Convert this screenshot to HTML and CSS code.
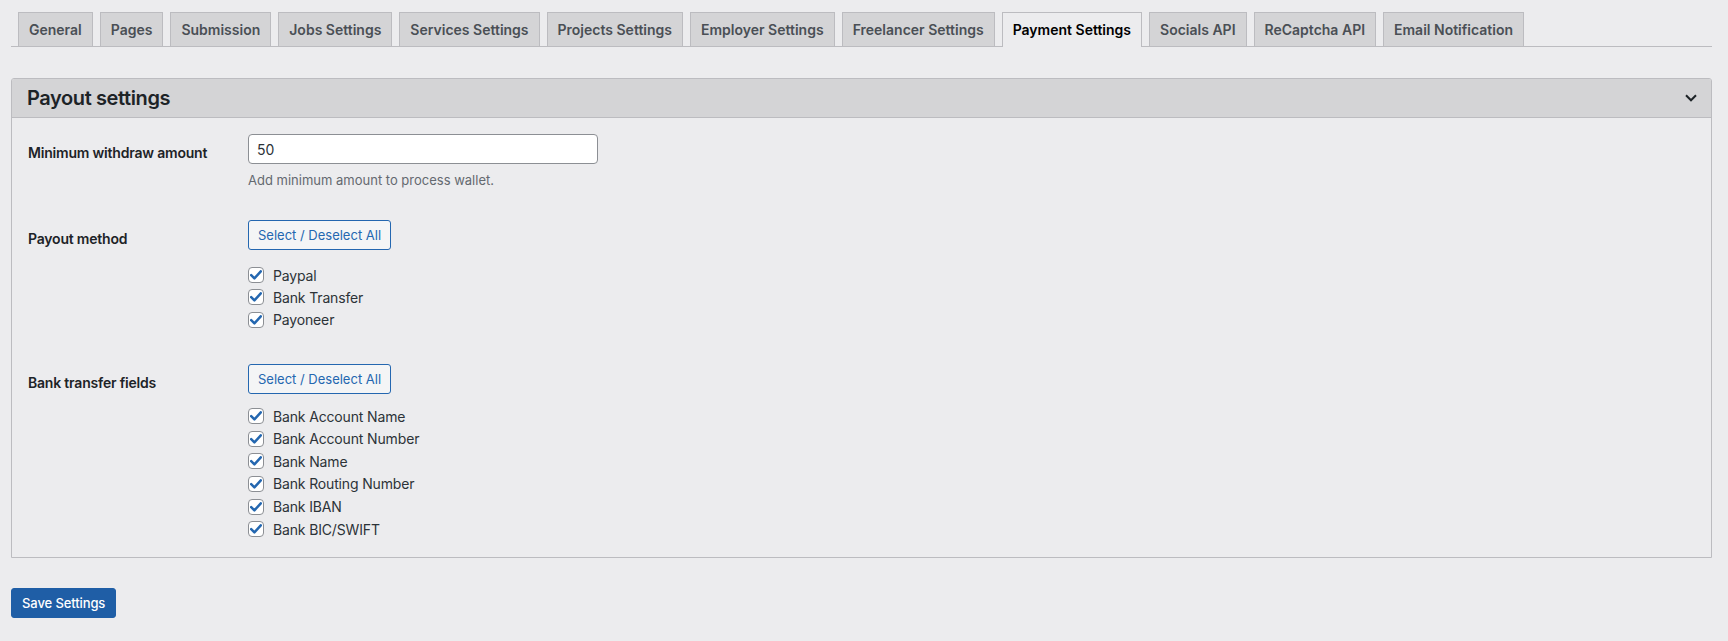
FILE: index.html
```html
<!DOCTYPE html>
<html lang="en">
<head>
<meta charset="utf-8">
<title>Payment Settings</title>
<link rel="stylesheet" href="styles.css">
</head>
<body>
<div class="wrap">
  <nav class="tabs">
    <a class="tab">General</a>
    <a class="tab">Pages</a>
    <a class="tab">Submission</a>
    <a class="tab">Jobs Settings</a>
    <a class="tab">Services Settings</a>
    <a class="tab">Projects Settings</a>
    <a class="tab">Employer Settings</a>
    <a class="tab">Freelancer Settings</a>
    <a class="tab active">Payment Settings</a>
    <a class="tab">Socials API</a>
    <a class="tab">ReCaptcha API</a>
    <a class="tab">Email Notification</a>
  </nav>

  <section class="panel">
    <header class="panel-head">
      <h2>Payout settings</h2>
      <svg class="chevron" width="12" height="8" viewBox="0 0 12 8"><path d="M1 1.3 L6 6.3 L11 1.3" fill="none" stroke="#1d2327" stroke-width="2"/></svg>
    </header>
    <div class="panel-body">
      <div class="row">
        <div class="label">Minimum withdraw amount</div>
        <div class="field">
          <input class="text" type="text" value="50">
          <p class="desc">Add minimum amount to process wallet.</p>
        </div>
      </div>

      <div class="row">
        <div class="label">Payout method</div>
        <div class="field">
          <button class="btn" type="button">Select / Deselect All</button>
          <div class="checks">
            <label class="check"><span class="box"><svg width="12" height="10" viewBox="0 0 12 10"><path d="M1.2 5.2 L4.4 8.3 L10.8 1.3" fill="none" stroke="#2467b0" stroke-width="2.5" stroke-linecap="round" stroke-linejoin="round"/></svg></span>Paypal</label>
            <label class="check"><span class="box"><svg width="12" height="10" viewBox="0 0 12 10"><path d="M1.2 5.2 L4.4 8.3 L10.8 1.3" fill="none" stroke="#2467b0" stroke-width="2.5" stroke-linecap="round" stroke-linejoin="round"/></svg></span>Bank Transfer</label>
            <label class="check"><span class="box"><svg width="12" height="10" viewBox="0 0 12 10"><path d="M1.2 5.2 L4.4 8.3 L10.8 1.3" fill="none" stroke="#2467b0" stroke-width="2.5" stroke-linecap="round" stroke-linejoin="round"/></svg></span>Payoneer</label>
          </div>
        </div>
      </div>

      <div class="row last">
        <div class="label">Bank transfer fields</div>
        <div class="field">
          <button class="btn" type="button">Select / Deselect All</button>
          <div class="checks bank">
            <label class="check"><span class="box"><svg width="12" height="10" viewBox="0 0 12 10"><path d="M1.2 5.2 L4.4 8.3 L10.8 1.3" fill="none" stroke="#2467b0" stroke-width="2.5" stroke-linecap="round" stroke-linejoin="round"/></svg></span>Bank Account Name</label>
            <label class="check"><span class="box"><svg width="12" height="10" viewBox="0 0 12 10"><path d="M1.2 5.2 L4.4 8.3 L10.8 1.3" fill="none" stroke="#2467b0" stroke-width="2.5" stroke-linecap="round" stroke-linejoin="round"/></svg></span>Bank Account Number</label>
            <label class="check"><span class="box"><svg width="12" height="10" viewBox="0 0 12 10"><path d="M1.2 5.2 L4.4 8.3 L10.8 1.3" fill="none" stroke="#2467b0" stroke-width="2.5" stroke-linecap="round" stroke-linejoin="round"/></svg></span>Bank Name</label>
            <label class="check"><span class="box"><svg width="12" height="10" viewBox="0 0 12 10"><path d="M1.2 5.2 L4.4 8.3 L10.8 1.3" fill="none" stroke="#2467b0" stroke-width="2.5" stroke-linecap="round" stroke-linejoin="round"/></svg></span>Bank Routing Number</label>
            <label class="check"><span class="box"><svg width="12" height="10" viewBox="0 0 12 10"><path d="M1.2 5.2 L4.4 8.3 L10.8 1.3" fill="none" stroke="#2467b0" stroke-width="2.5" stroke-linecap="round" stroke-linejoin="round"/></svg></span>Bank IBAN</label>
            <label class="check"><span class="box"><svg width="12" height="10" viewBox="0 0 12 10"><path d="M1.2 5.2 L4.4 8.3 L10.8 1.3" fill="none" stroke="#2467b0" stroke-width="2.5" stroke-linecap="round" stroke-linejoin="round"/></svg></span>Bank BIC/SWIFT</label>
          </div>
        </div>
      </div>
    </div>
  </section>

  <button class="save" type="button">Save Settings</button>
</div>
</body>
</html>
```

FILE: styles.css
```css
* { box-sizing: border-box; }

body {
  margin: 0;
  background: #ececee;
  font-family: Inter, "Liberation Sans", sans-serif;
  color: #1d2327;
}

.wrap {
  padding: 12px 16px 40px 11px;
}

/* Tabs */
.tabs {
  display: flex;
  align-items: flex-end;
  height: 35px;
  border-bottom: 1px solid #bcbcc0;
}

.tab {
  margin-left: 7px;
  padding: 0 10px;
  height: 34px;
  line-height: 33px;
  border: 1px solid #bcbcc0;
  border-bottom: 0;
  background: #d4d4d6;
  color: #4a4f55;
  font-size: 14px;
  font-weight: 600;
  white-space: nowrap;
  cursor: pointer;
}

.tab.active {
  height: 35px;
  margin-bottom: -1px;
  background: #ececee;
  color: #000;
}

/* Panel */
.panel {
  margin-top: 31px;
  border: 1px solid #bcbcc0;
  border-radius: 3px 3px 0 0;
}

.panel-head {
  height: 39px;
  display: flex;
  align-items: center;
  justify-content: space-between;
  padding: 0 14px 0 15px;
  background: #d4d4d6;
  border-bottom: 1px solid #bcbcc0;
  border-radius: 2px 2px 0 0;
}

.panel-head h2 {
  margin: 0;
  font-size: 20px;
  font-weight: 600;
  letter-spacing: -0.4px;
  color: #1d2327;
}

.chevron { display: block; }

.panel-body {
  padding: 0 16px;
}

.row {
  display: grid;
  grid-template-columns: 220px 1fr;
  padding: 15px 0;
}

.row:first-child { padding-top: 16px; }
.row.last { padding-bottom: 13px; }

.label {
  font-size: 14px;
  font-weight: 600;
  line-height: 20px;
  padding-top: 9px;
  letter-spacing: -0.2px;
  color: #1d2327;
}

.text {
  display: block;
  width: 350px;
  height: 30px;
  padding: 0 8px;
  border: 1px solid #8c8f94;
  border-radius: 4px;
  background: #fff;
  font-family: inherit;
  font-size: 14px;
  color: #2c3338;
}

.desc {
  margin: 6px 0 0;
  font-size: 13px;
  line-height: 20px;
  color: #646970;
}

.btn {
  display: block;
  height: 30px;
  padding: 0 9px;
  border: 1px solid #2467b0;
  border-radius: 3px;
  background: #f4f5f6;
  color: #2467b0;
  font-family: inherit;
  font-size: 13px;
  cursor: pointer;
}

.checks {
  margin: 14px 0 3px;
}

.checks.bank {
  margin: 11px 0 4px;
}

.check {
  display: flex;
  align-items: center;
  height: 22.3px;
  font-size: 14px;
  letter-spacing: -0.15px;
  color: #2c3338;
}

.bank .check {
  height: 22.6px;
}

.box {
  width: 16px;
  height: 16px;
  margin-right: 9px;
  border: 1px solid #8c8f94;
  border-radius: 4px;
  background: #fff;
  display: flex;
  align-items: center;
  justify-content: center;
}

.box svg { display: block; }

.save {
  display: block;
  margin-top: 30px;
  height: 30px;
  padding: 0 10px;
  border: 1px solid #1f5ea6;
  border-radius: 3px;
  background: #1f5ea6;
  color: #fff;
  font-family: inherit;
  font-size: 13px;
  font-weight: 500;
  letter-spacing: -0.1px;
  cursor: pointer;
}
```
